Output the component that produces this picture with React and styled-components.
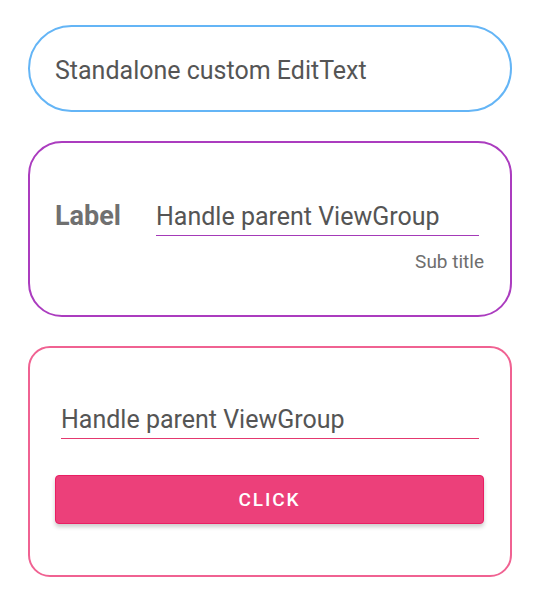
import React from "react"
import styled, { createGlobalStyle } from "styled-components"

const GlobalStyle = createGlobalStyle`
  body {
    margin: 0;
    background: #ffffff;
    font-family: Roboto, "Noto Sans", sans-serif;
  }
`

const Page = styled.main`
  display: flex;
  flex-direction: column;
  gap: 29px;
  padding: 25px 28px 20px;
`

const Card = styled.section`
  box-sizing: border-box;
  height: ${(p) => p.height}px;
  border: 2px solid ${(p) => p.color};
  border-radius: ${(p) => p.radius}px;
  padding: ${(p) => p.padTop || 0}px 26px 0 25px;
  display: flex;
  flex-direction: column;
  justify-content: ${(p) => (p.centered ? "center" : "flex-start")};
`

const PlainText = styled.div`
  font-size: 25px;
  line-height: 30px;
  color: #555555;
  margin-top: 4px;
`

const Row = styled.div`
  display: flex;
  align-items: baseline;
`

const Label = styled.div`
  width: 101px;
  flex-shrink: 0;
  font-size: 27px;
  font-weight: 700;
  line-height: 30px;
  color: #707070;
`

const Field = styled.div`
  flex: ${(p) => (p.grow ? "1 1 auto" : "0 0 auto")};
  margin: 0 5px 0 ${(p) => p.indent || 0}px;
  padding-bottom: 3px;
  border-bottom: 1px solid ${(p) => p.line};
  font-size: 25px;
  line-height: 30px;
  color: #555555;
  white-space: nowrap;
`

const SubTitle = styled.div`
  align-self: flex-end;
  margin-top: 15px;
  font-size: 19px;
  line-height: 22px;
  color: #6e6e6e;
`

const Button = styled.button`
  margin-top: 36px;
  height: 49px;
  width: 100%;
  border: 1px solid #e91e63;
  border-radius: 4px;
  background: #ec407a;
  box-shadow: 0 3px 4px rgba(0, 0, 0, 0.2);
  color: #ffffff;
  font-family: Roboto, "Noto Sans", sans-serif;
  font-size: 19px;
  font-weight: 500;
  letter-spacing: 0.1em;
  text-transform: uppercase;
  cursor: pointer;
`

export default function App() {
  return (
    <>
      <GlobalStyle />
      <Page>
        <Card height={87} color="#64b5f6" radius={44} centered>
          <PlainText>Standalone custom EditText</PlainText>
        </Card>

        <Card height={176} color="#ab3cbf" radius={34} padTop={58}>
          <Row>
            <Label>Label</Label>
            <Field grow line="#a43ab8">Handle parent ViewGroup</Field>
          </Row>
          <SubTitle>Sub title</SubTitle>
        </Card>

        <Card height={231} color="#f06292" radius={22} padTop={57}>
          <Field line="#e4386f" indent={6}>Handle parent ViewGroup</Field>
          <Button>Click</Button>
        </Card>
      </Page>
    </>
  )
}
